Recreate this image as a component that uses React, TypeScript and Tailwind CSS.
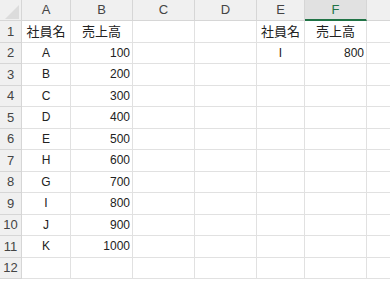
import React from "react"

// G is off screen in the reference, its letter isn't visible
const cols = ["A", "B", "C", "D", "E", "F", ""]

const data: [string, string][] = [
  ["A", "100"],
  ["B", "200"],
  ["C", "300"],
  ["D", "400"],
  ["E", "500"],
  ["H", "600"],
  ["G", "700"],
  ["I", "800"],
  ["J", "900"],
  ["K", "1000"],
]

const font = { fontFamily: '"Liberation Sans", "Noto Sans CJK JP", sans-serif' }

function Cell({ children, align = "center" }: { children?: React.ReactNode; align?: "center" | "right" }) {
  return (
    <div
      className={`h-[21.5px] border-r border-b border-[#e1e1e1] bg-white flex items-center text-[12px] text-[#222] overflow-hidden whitespace-nowrap ${
        align === "right" ? "justify-end pr-[2px]" : "justify-center"
      }`}
    >
      {children}
    </div>
  )
}

function RowHead({ n }: { n: number }) {
  return (
    <div className="h-[21.5px] border-r border-b border-[#d6d6d6] bg-[#f0f0f0] flex items-center justify-center text-[13px] text-[#444]">
      {n}
    </div>
  )
}

export default function App() {
  const rows: React.ReactNode[][] = []
  for (let r = 1; r <= 12; r++) {
    const cells: React.ReactNode[] = []
    if (r === 1) {
      cells.push(<span className="text-[13px]">社員名</span>, <span className="text-[13px]">売上高</span>, null, null, <span className="text-[13px]">社員名</span>, <span className="text-[13px]">売上高</span>, null)
    } else if (r === 2) {
      cells.push(data[0][0], data[0][1], null, null, "I", "800", null)
    } else if (r <= 11) {
      cells.push(data[r - 2][0], data[r - 2][1], null, null, null, null, null)
    } else {
      cells.push(null, null, null, null, null, null, null)
    }
    rows.push(cells)
  }

  return (
    <div className="w-[390px] h-[283px] overflow-hidden bg-white" style={font}>
      <div className="grid grid-cols-[22px_49px_62px_62px_62px_48px_62px_62px] w-[429px]">
        {/* header */}
        <div className="h-[21px] bg-[#f0f0f0] border-r border-b border-[#d6d6d6] relative">
          <svg width="22" height="21" className="absolute left-0 top-0">
            <polygon points="5,19 19,19 19,5" fill="#dcdcdc" />
          </svg>
        </div>
        {cols.map((c, i) =>
          c === "F" ? (
            <div key={i} className="h-[21px] bg-[#e1e1e1] border-r border-[#d6d6d6] border-b-2 border-b-[#217346] flex items-center justify-center text-[13px] text-[#217346]">
              {c}
            </div>
          ) : (
            <div key={i} className="h-[21px] bg-[#f0f0f0] border-r border-b border-[#d6d6d6] flex items-center justify-center text-[13px] text-[#444]">
              {c}
            </div>
          )
        )}

        {rows.map((cells, i) => (
          <React.Fragment key={i}>
            <RowHead n={i + 1} />
            {cells.map((v, j) => (
              <Cell key={j} align={(j === 1 || j === 5) && i > 0 ? "right" : "center"}>
                {v}
              </Cell>
            ))}
          </React.Fragment>
        ))}
      </div>
    </div>
  )
}
